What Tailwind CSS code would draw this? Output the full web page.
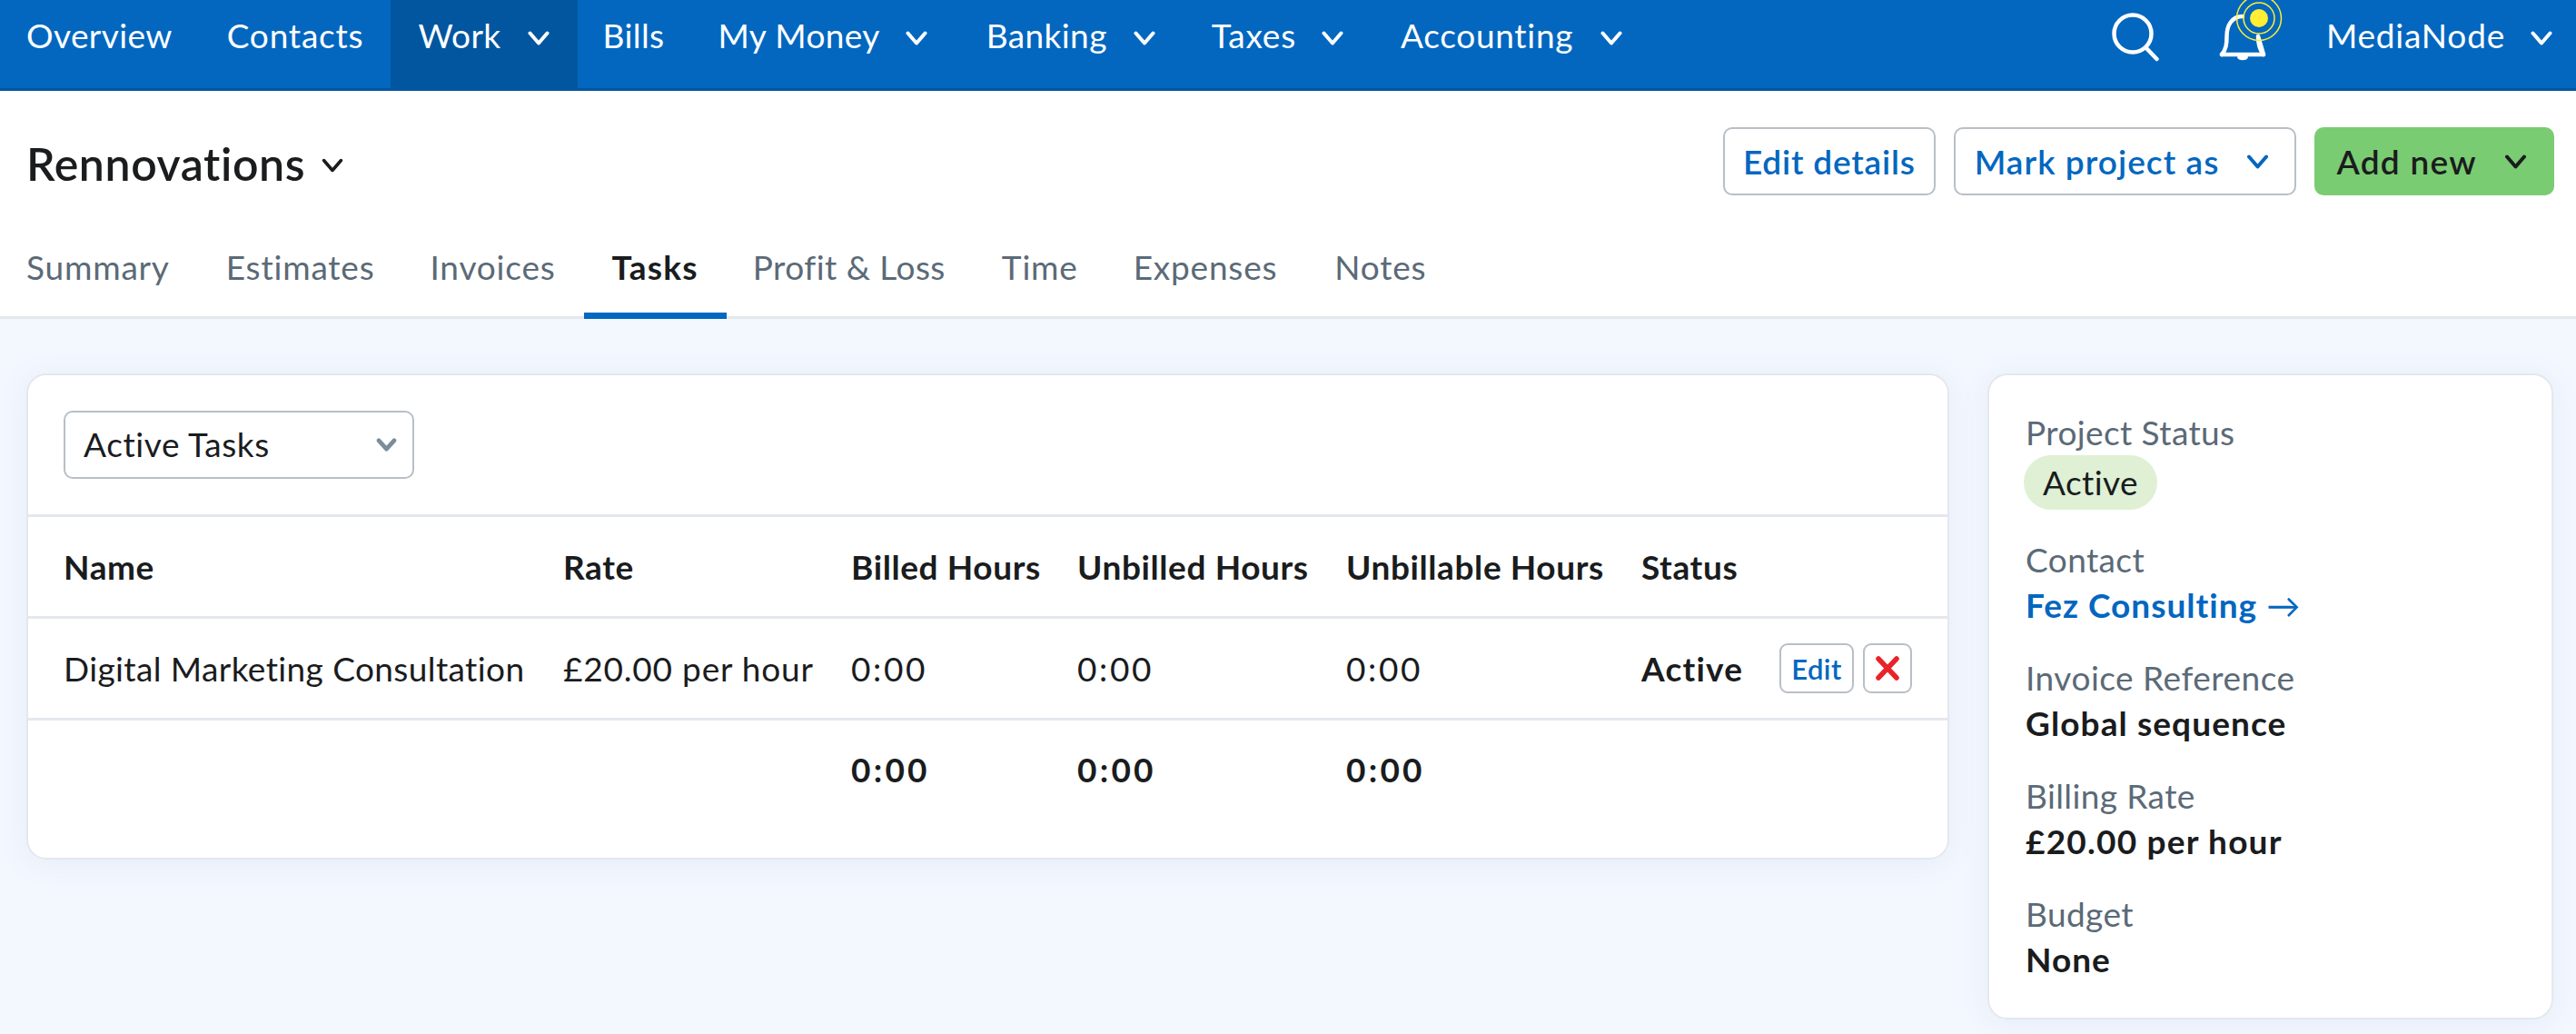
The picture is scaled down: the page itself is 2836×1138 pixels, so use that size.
<!doctype html>
<html lang="en">
<head>
<meta charset="utf-8">
<title>Rennovations</title>
<script src="https://cdn.jsdelivr.net/npm/@tailwindcss/browser@4"></script>
</head>
<body class="font-['Lato',sans-serif] bg-[#f3f7fe] text-[#1a1c1e] text-[37px] tracking-[0.4px] leading-[44px] h-[1138px] overflow-hidden">

<nav class="h-[100px] bg-[#0367bf] border-b-[3px] border-[#01569f] flex text-white">
  <a class="pl-[29px] pr-[30px] pt-[17px]">Overview</a>
  <a class="pl-[30px] pr-[30px] pt-[17px] tracking-[0.8px]">Contacts</a>
  <a class="pl-[30px] pr-[31px] pt-[17px] bg-[#01569f] flex items-start h-[100px]">Work<svg class="ml-[29px] mt-[17px] w-[24px] h-[16px]" viewBox="0 0 24 16" fill="none" stroke="currentColor" stroke-width="4" stroke-linecap="round" stroke-linejoin="round"><path d="M2.500 2.500 12 13.500 21.500 2.500"/></svg></a>
  <a class="pl-[28px] pr-[29px] pt-[17px]">Bills</a>
  <a class="pl-[30px] pr-[35px] pt-[17px] flex items-start">My Money<svg class="ml-[28px] mt-[17px] w-[24px] h-[16px]" viewBox="0 0 24 16" fill="none" stroke="currentColor" stroke-width="4" stroke-linecap="round" stroke-linejoin="round"><path d="M2.500 2.500 12 13.500 21.500 2.500"/></svg></a>
  <a class="pl-[30px] pr-[32px] pt-[17px] flex items-start">Banking<svg class="ml-[29px] mt-[17px] w-[24px] h-[16px]" viewBox="0 0 24 16" fill="none" stroke="currentColor" stroke-width="4" stroke-linecap="round" stroke-linejoin="round"><path d="M2.500 2.500 12 13.500 21.500 2.500"/></svg></a>
  <a class="pl-[30px] pr-[33px] pt-[17px] flex items-start tracking-[0.8px]">Taxes<svg class="ml-[28px] mt-[17px] w-[24px] h-[16px]" viewBox="0 0 24 16" fill="none" stroke="currentColor" stroke-width="4" stroke-linecap="round" stroke-linejoin="round"><path d="M2.500 2.500 12 13.500 21.500 2.500"/></svg></a>
  <a class="pl-[30px] pr-[30px] pt-[17px] flex items-start tracking-[0.7px]">Accounting<svg class="ml-[30px] mt-[17px] w-[24px] h-[16px]" viewBox="0 0 24 16" fill="none" stroke="currentColor" stroke-width="4" stroke-linecap="round" stroke-linejoin="round"><path d="M2.500 2.500 12 13.500 21.500 2.500"/></svg></a>
  <div class="ml-auto flex items-start pr-[26px]">
    <svg class="mt-[14px] w-[54px] h-[54px]" viewBox="0 0 54 54" fill="none" stroke="white" stroke-width="4.500" stroke-linecap="round"><circle cx="24" cy="23" r="20.500"/><path d="M39 39 50.500 51"/></svg>
    <div class="relative ml-[65px] w-[52px] h-[60px] mt-[12px]">
      <svg class="w-[52px] h-[60px]" viewBox="0 0 52 60" fill="none" stroke="white" stroke-width="4.500" stroke-linecap="round" stroke-linejoin="round"><path d="M3 48C8 42 8.500 36 8.500 28 8.500 16 14 6 26 6M43 28C43 36 44 42 49 48Z"/><path d="M3 48H49"/><path d="M21 51C22 54 30 54 31 51Z" fill="white" stroke-width="2"/></svg>
      <svg class="absolute left-[17px] top-[-12px] w-[54px] h-[54px]" viewBox="0 0 54 54" fill="none"><circle cx="27" cy="20" r="24.500" stroke="#ffee33" stroke-width="1.500"/><circle cx="27" cy="20" r="17" stroke="#ffee33" stroke-width="1.500"/><circle cx="27" cy="20" r="10" fill="#ffee33"/></svg>
    </div>
    <span class="ml-[66px] pt-[17px] flex items-start tracking-[0.8px]">MediaNode<svg class="ml-[28px] mt-[17px] w-[24px] h-[16px]" viewBox="0 0 24 16" fill="none" stroke="currentColor" stroke-width="4" stroke-linecap="round" stroke-linejoin="round"><path d="M2.500 2.500 12 13.500 21.500 2.500"/></svg></span>
  </div>
</nav>

<header class="bg-white h-[251px] border-b-[3px] border-[#e4e7ec] flex flex-col">
  <div class="flex items-start pl-[29px] pr-[24px] pt-[40px] h-[163px]">
    <h1 class="mt-[13px] text-[50px] tracking-[0.6px] leading-[54px] font-semibold flex items-center">Rennovations<svg class="ml-[18px] mt-[4px] w-[24px] h-[16px]" viewBox="0 0 24 16" fill="none" stroke="#1a1c1e" stroke-width="3.500" stroke-linecap="round" stroke-linejoin="round"><path d="M2.500 2.500 12 13.500 21.500 2.500"/></svg></h1>
    <div class="ml-auto flex gap-[20px] font-semibold tracking-[0.8px]">
      <a class="h-[75px] px-[20px] flex items-center border-[2.500px] border-[#b8bfc6] rounded-[10px] text-[#0367bf] bg-white">Edit details</a>
      <a class="h-[75px] pl-[21px] pr-[28px] flex items-center border-[2.500px] border-[#b8bfc6] rounded-[10px] text-[#0367bf] bg-white tracking-[1.050px]">Mark project as<svg class="ml-[30px] w-[25px] h-[16px]" viewBox="0 0 24 16" fill="none" stroke="currentColor" stroke-width="4" stroke-linecap="round" stroke-linejoin="round"><path d="M2.500 2.500 12 13.500 21.500 2.500"/></svg></a>
      <a class="h-[75px] pl-[24px] pr-[30px] flex items-center rounded-[10px] bg-[#7acc72] text-[#1a1c1e] tracking-[1.300px]">Add new<svg class="ml-[30px] w-[25px] h-[16px]" viewBox="0 0 24 16" fill="none" stroke="currentColor" stroke-width="4" stroke-linecap="round" stroke-linejoin="round"><path d="M2.500 2.500 12 13.500 21.500 2.500"/></svg></a>
    </div>
  </div>
  <div class="flex pl-[29px] text-[#5b6a77] h-[88px] mb-[-3px] tracking-[0.8px]">
    <a class="pt-[9px] mr-[62px]">Summary</a>
    <a class="pt-[9px] mr-[61px]">Estimates</a>
    <a class="pt-[9px] mr-[31px]">Invoices</a>
    <a class="pt-[9px] px-[31px] font-bold text-[#1a1c1e] border-b-[7px] border-[#0367bf] tracking-[1.200px]">Tasks</a>
    <a class="pt-[9px] ml-[29px] mr-[62px] tracking-[0.45px]">Profit &amp; Loss</a>
    <a class="pt-[9px] mr-[61px]">Time</a>
    <a class="pt-[9px] mr-[63px]">Expenses</a>
    <a class="pt-[9px]">Notes</a>
  </div>
</header>

<main class="flex items-start gap-[42px] pl-[29px] pt-[60px]">
  <section class="w-[2117px] h-[535px] bg-white border-2 border-[#e4e8ee] rounded-[22px] flex flex-col shadow-[0_4px_30px_rgba(120,150,200,0.10)]">
    <div class="h-[156px] border-b-[3px] border-[#e4e8ee] pl-[39px] pt-[39px]">
      <div class="w-[386px] h-[75px] pl-[20px] pr-[17px] border-[2.500px] border-[#b8bfc6] rounded-[10px] flex items-center justify-between"><span class="mb-[2px] tracking-[0.6px]">Active Tasks</span><svg class="w-[23px] h-[15px]" viewBox="0 0 24 16" fill="none" stroke="#7d8c99" stroke-width="5" stroke-linecap="round" stroke-linejoin="round"><path d="M3 3 12 13 21 3"/></svg></div>
    </div>
    <div class="grid grid-cols-[550px_317px_249px_296px_325px_1fr] pl-[39px] h-[112px] items-center border-b-[3px] border-[#e4e8ee] font-bold tracking-[0.6px]">
      <span>Name</span><span>Rate</span><span>Billed Hours</span><span>Unbilled Hours</span><span>Unbillable Hours</span><span>Status</span>
    </div>
    <div class="grid grid-cols-[550px_317px_249px_296px_325px_152px_1fr] pl-[39px] h-[112px] items-center border-b-[3px] border-[#e4e8ee]">
      <span>Digital Marketing Consultation</span><span class="tracking-[0.8px]">£20.00 per hour</span><span class="tracking-[2.600px]">0:00</span><span class="tracking-[2.600px]">0:00</span><span class="tracking-[2.600px]">0:00</span><span class="font-bold tracking-[1.200px]">Active</span>
      <div class="flex gap-[10px]">
        <a class="w-[82px] h-[55px] flex items-center justify-center border-[2.500px] border-[#b8bfc6] rounded-[9px] text-[#0367bf] text-[31px] font-semibold">Edit</a>
        <a class="w-[54px] h-[55px] flex items-center justify-center border-[2.500px] border-[#b8bfc6] rounded-[9px]"><svg class="w-[26px] h-[27px]" viewBox="0 0 26 27" fill="none" stroke="#e8232a" stroke-width="5.500" stroke-linecap="round"><path d="M3 3 23 24M23 3 3 24"/></svg></a>
      </div>
    </div>
    <div class="grid grid-cols-[550px_317px_249px_296px_325px_1fr] pl-[39px] h-[107px] items-center font-bold tracking-[3.200px]">
      <span></span><span></span><span>0:00</span><span>0:00</span><span>0:00</span><span></span>
    </div>
  </section>

  <aside class="w-[623px] h-[711px] bg-white border-2 border-[#e4e8ee] rounded-[22px] pl-[40px] pt-[41px] shadow-[0_4px_30px_rgba(120,150,200,0.10)]">
    <p class="text-[#5b6a77]">Project Status</p>
    <p class="mt-[3px] ml-[-2px] w-[147px] h-[60px] rounded-full bg-[#dff0d5] flex items-center justify-center">Active</p>
    <p class="text-[#5b6a77] mt-[33px]">Contact</p>
    <p class="text-[#0367bf] font-bold mt-[6px] tracking-[1px]">Fez Consulting <span class="font-normal">→</span></p>
    <p class="text-[#5b6a77] mt-[36px] tracking-[0.5px]">Invoice Reference</p>
    <p class="font-bold mt-[6px] tracking-[1.100px]">Global sequence</p>
    <p class="text-[#5b6a77] mt-[36px]">Billing Rate</p>
    <p class="font-bold mt-[6px] tracking-[1.200px]">£20.00 per hour</p>
    <p class="text-[#5b6a77] mt-[36px]">Budget</p>
    <p class="font-bold mt-[6px] tracking-[1px]">None</p>
  </aside>
</main>
</body>
</html>
